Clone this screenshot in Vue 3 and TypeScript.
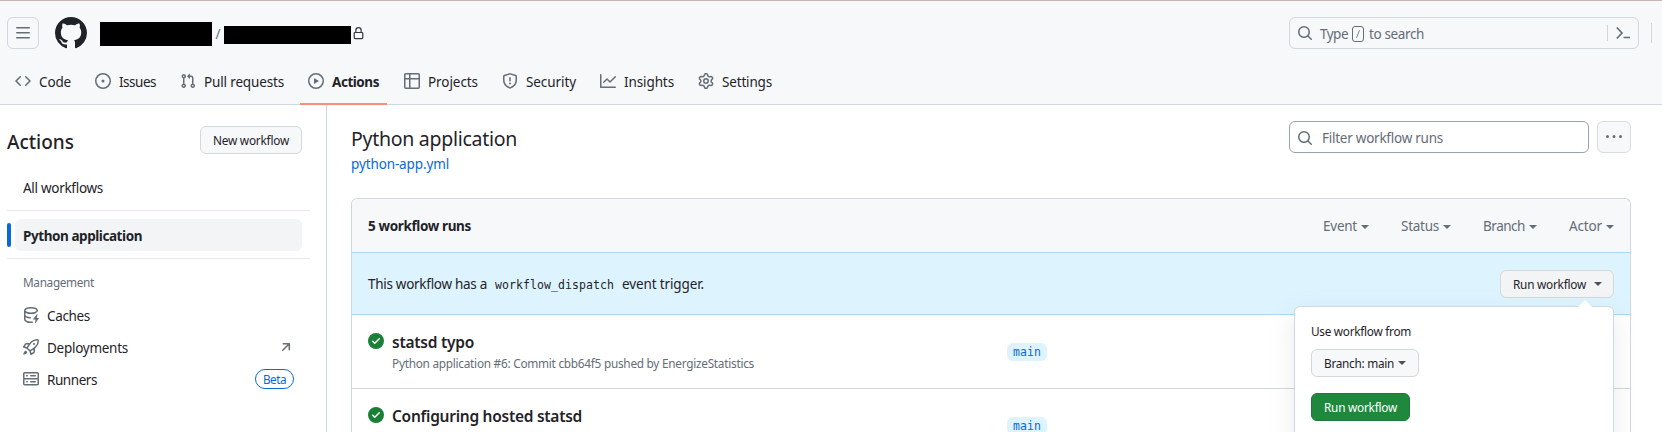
<script setup lang="ts">
import type { Directive } from 'vue'

// Tracks a text run so that it spans the requested width in pixels.
const vFit: Directive<HTMLElement, number> = {
  mounted(el, { value }) {
    const range = document.createRange()
    range.selectNodeContents(el)
    const natural = range.getBoundingClientRect().width
    const count = (el.textContent ?? '').length
    el.style.letterSpacing = `${(value - natural) / count}px`
    el.style.width = `${value}px`
  },
}

interface Tab { label: string; width: number; icon: string; active?: boolean }
interface Run { title: string; width: number; meta?: string; metaWidth?: number; branch: string }

const icons: Record<string, string> = {
  code: 'm11.28 3.22 4.25 4.25a.75.75 0 0 1 0 1.06l-4.25 4.25a.749.749 0 0 1-1.275-.326.749.749 0 0 1 .215-.734L13.94 8l-3.72-3.72a.749.749 0 0 1 .326-1.275.749.749 0 0 1 .734.215Zm-6.56 0a.751.751 0 0 1 1.042.018.751.751 0 0 1 .018 1.042L2.06 8l3.72 3.72a.749.749 0 0 1-.326 1.275.749.749 0 0 1-.734-.215L.47 8.53a.75.75 0 0 1 0-1.06Z',
  issues: 'M8 9.5a1.5 1.5 0 1 0 0-3 1.5 1.5 0 0 0 0 3ZM8 0a8 8 0 1 1 0 16A8 8 0 0 1 8 0ZM1.5 8a6.5 6.5 0 1 0 13 0 6.5 6.5 0 0 0-13 0Z',
  pulls: 'M1.5 3.25a2.25 2.25 0 1 1 3 2.122v5.256a2.251 2.251 0 1 1-1.5 0V5.372A2.25 2.25 0 0 1 1.5 3.25Zm5.677-.177L9.573.677A.25.25 0 0 1 10 .854V2.5h1A2.5 2.5 0 0 1 13.5 5v5.628a2.251 2.251 0 1 1-1.5 0V5a1 1 0 0 0-1-1h-1v1.646a.25.25 0 0 1-.427.177L7.177 3.427a.25.25 0 0 1 0-.354ZM3.75 2.5a.75.75 0 1 0 0 1.5.75.75 0 0 0 0-1.5Zm0 9.5a.75.75 0 1 0 0 1.5.75.75 0 0 0 0-1.5Zm8.25.75a.75.75 0 1 0 1.5 0 .75.75 0 0 0-1.5 0Z',
  actions: 'M8 0a8 8 0 1 1 0 16A8 8 0 0 1 8 0ZM1.5 8a6.5 6.5 0 1 0 13 0 6.5 6.5 0 0 0-13 0Zm4.879-2.773 4.264 2.559a.25.25 0 0 1 0 .428l-4.264 2.559A.25.25 0 0 1 6 10.559V5.442a.25.25 0 0 1 .379-.215Z',
  projects: 'M0 1.75C0 .784.784 0 1.75 0h12.5C15.216 0 16 .784 16 1.75v12.5A1.75 1.75 0 0 1 14.25 16H1.75A1.75 1.75 0 0 1 0 14.25ZM6.5 6.5v8h7.75a.25.25 0 0 0 .25-.25V6.5Zm8-1.5V1.75a.25.25 0 0 0-.25-.25H6.5V5Zm-13 1.5v7.75c0 .138.112.25.25.25H5v-8ZM5 5V1.5H1.75a.25.25 0 0 0-.25.25V5Z',
  security: 'M7.467.133a1.748 1.748 0 0 1 1.066 0l5.25 1.68A1.75 1.75 0 0 1 15 3.48V7c0 1.566-.32 3.182-1.303 4.682-.983 1.498-2.585 2.813-5.032 3.855a1.697 1.697 0 0 1-1.33 0c-2.447-1.042-4.049-2.357-5.032-3.855C1.32 10.182 1 8.566 1 7V3.48a1.755 1.755 0 0 1 1.217-1.667Zm.61 1.429a.25.25 0 0 0-.153 0l-5.25 1.68a.25.25 0 0 0-.174.238V7c0 1.358.275 2.666 1.057 3.86.784 1.194 2.121 2.34 4.366 3.297a.196.196 0 0 0 .154 0c2.245-.956 3.582-2.104 4.366-3.298C13.225 9.666 13.5 8.36 13.5 7V3.48a.251.251 0 0 0-.174-.237l-5.25-1.68ZM8.75 4.75v3a.75.75 0 0 1-1.5 0v-3a.75.75 0 0 1 1.5 0ZM9 10.5a1 1 0 1 1-2 0 1 1 0 0 1 2 0Z',
  insights: 'M1.5 1.75V13.5h13.75a.75.75 0 0 1 0 1.5H.75a.75.75 0 0 1-.75-.75V1.75a.75.75 0 0 1 1.5 0Zm14.28 2.53-5.25 5.25a.75.75 0 0 1-1.06 0L7 7.06 4.28 9.78a.751.751 0 0 1-1.042-.018.751.751 0 0 1-.018-1.042l3.25-3.25a.75.75 0 0 1 1.06 0L10 7.94l4.72-4.72a.751.751 0 0 1 1.042.018.751.751 0 0 1 .018 1.042Z',
  settings: 'M8 0a8.2 8.2 0 0 1 .701.031C9.444.095 9.99.645 10.16 1.29l.288 1.107c.018.066.079.158.212.224.231.114.454.243.668.386.123.082.233.09.299.071l1.103-.303c.644-.176 1.392.021 1.82.63.27.385.506.792.704 1.218.315.675.111 1.422-.364 1.891l-.814.806c-.049.048-.098.147-.088.294.016.257.016.515 0 .772-.01.147.038.246.088.294l.814.806c.475.469.679 1.216.364 1.891a7.977 7.977 0 0 1-.704 1.217c-.428.61-1.176.807-1.82.63l-1.102-.302c-.067-.019-.177-.011-.3.071a5.909 5.909 0 0 1-.668.386c-.133.066-.194.158-.211.224l-.29 1.106c-.168.646-.715 1.196-1.458 1.26a8.006 8.006 0 0 1-1.402 0c-.743-.064-1.289-.614-1.458-1.26l-.289-1.106c-.018-.066-.079-.158-.212-.224a5.738 5.738 0 0 1-.668-.386c-.123-.082-.233-.09-.299-.071l-1.103.303c-.644.176-1.392-.021-1.82-.63a8.12 8.12 0 0 1-.704-1.218c-.315-.675-.111-1.422.363-1.891l.815-.806c.05-.048.098-.147.088-.294a6.214 6.214 0 0 1 0-.772c.01-.147-.038-.246-.088-.294l-.815-.806C.635 6.045.431 5.298.746 4.623a7.92 7.92 0 0 1 .704-1.217c.428-.61 1.176-.807 1.82-.63l1.102.302c.067.019.177.011.3-.071.214-.143.437-.272.668-.386.133-.066.194-.158.211-.224l.29-1.106C6.009.645 6.556.095 7.299.03 7.53.01 7.764 0 8 0Zm-.571 1.525c-.036.003-.108.036-.137.146l-.289 1.105c-.147.561-.549.967-.998 1.189-.173.086-.34.183-.5.29-.417.278-.97.423-1.529.27l-1.103-.303c-.109-.03-.175.016-.195.045-.22.312-.412.644-.573.99-.014.031-.021.11.059.19l.815.806c.411.406.562.957.53 1.456a4.709 4.709 0 0 0 0 .582c.032.499-.119 1.05-.53 1.456l-.815.806c-.081.08-.073.159-.059.19.162.346.353.677.573.989.02.03.085.076.195.046l1.102-.303c.56-.153 1.113-.008 1.53.27.161.107.328.204.501.29.447.222.85.629.997 1.189l.289 1.105c.029.109.101.143.137.146a6.6 6.6 0 0 0 1.142 0c.036-.003.108-.036.137-.146l.289-1.105c.147-.561.549-.967.998-1.189.173-.086.34-.183.5-.29.417-.278.97-.423 1.529-.27l1.103.303c.109.029.175-.016.195-.045.22-.313.411-.644.573-.99.014-.031.021-.11-.059-.19l-.815-.806c-.411-.406-.562-.957-.53-1.456a4.709 4.709 0 0 0 0-.582c-.032-.499.119-1.05.53-1.456l.815-.806c.081-.08.073-.159.059-.19a6.464 6.464 0 0 0-.573-.989c-.02-.03-.085-.076-.195-.046l-1.102.303c-.56.153-1.113.008-1.53-.27a4.44 4.44 0 0 0-.501-.29c-.447-.222-.85-.629-.997-1.189l-.289-1.105c-.029-.11-.101-.143-.137-.146a6.6 6.6 0 0 0-1.142 0ZM11 8a3 3 0 1 1-6 0 3 3 0 0 1 6 0ZM9.5 8a1.5 1.5 0 1 0-3.001.001A1.5 1.5 0 0 0 9.5 8Z',
  search: 'M10.68 11.74a6 6 0 0 1-7.922-8.982 6 6 0 0 1 8.982 7.922l3.04 3.04a.749.749 0 0 1-.326 1.275.749.749 0 0 1-.734-.215ZM11.5 7a4.499 4.499 0 1 0-8.997 0A4.499 4.499 0 0 0 11.5 7Z',
  menu: 'M1 2.75A.75.75 0 0 1 1.75 2h12.5a.75.75 0 0 1 0 1.5H1.75A.75.75 0 0 1 1 2.75Zm0 5A.75.75 0 0 1 1.75 7h12.5a.75.75 0 0 1 0 1.5H1.75A.75.75 0 0 1 1 7.75ZM1.75 12h12.5a.75.75 0 0 1 0 1.5H1.75a.75.75 0 0 1 0-1.5Z',
  mark: 'M8 0c4.42 0 8 3.58 8 8a8.013 8.013 0 0 1-5.45 7.59c-.4.08-.55-.17-.55-.38 0-.27.01-1.13.01-2.2 0-.75-.25-1.23-.54-1.48 1.78-.2 3.65-.88 3.65-3.95 0-.88-.31-1.59-.82-2.15.08-.2.36-1.02-.08-2.12 0 0-.67-.22-2.2.82-.64-.18-1.32-.27-2-.27-.68 0-1.36.09-2 .27-1.53-1.03-2.2-.82-2.2-.82-.44 1.1-.16 1.92-.08 2.12-.51.56-.82 1.28-.82 2.15 0 3.06 1.86 3.75 3.64 3.95-.23.2-.44.55-.51 1.07-.46.21-1.61.55-2.33-.66-.15-.24-.6-.83-1.23-.82-.67.01-.27.38.01.53.34.19.73.9.82 1.13.16.45.68 1.31 2.69.94 0 .67.01 1.3.01 1.49 0 .21-.15.45-.55.38A7.995 7.995 0 0 1 0 8c0-4.42 3.58-8 8-8Z',
  lock: 'M4 4a4 4 0 0 1 8 0v2h.25c.966 0 1.75.784 1.75 1.75v5.5A1.75 1.75 0 0 1 12.25 15h-8.5A1.75 1.75 0 0 1 2 13.25v-5.5C2 6.784 2.784 6 3.75 6H4Zm8.25 3.5h-8.5a.25.25 0 0 0-.25.25v5.5c0 .138.112.25.25.25h8.5a.25.25 0 0 0 .25-.25v-5.5a.25.25 0 0 0-.25-.25ZM10.5 6V4a2.5 2.5 0 1 0-5 0v2Z',
  dots: 'M8 9a1.5 1.5 0 1 0 0-3 1.5 1.5 0 0 0 0 3ZM1.5 9a1.5 1.5 0 1 0 0-3 1.5 1.5 0 0 0 0 3Zm13 0a1.5 1.5 0 1 0 0-3 1.5 1.5 0 0 0 0 3Z',
  check: 'M8 16A8 8 0 1 1 8 0a8 8 0 0 1 0 16Zm3.78-9.72a.751.751 0 0 0-.018-1.042.751.751 0 0 0-1.042-.018L6.75 9.19 5.28 7.72a.751.751 0 0 0-1.042.018.751.751 0 0 0-.018 1.042l2 2a.75.75 0 0 0 1.06 0Z',
  caches: 'M2.5 5.724V8c0 .248.238.7 1.169 1.159.874.43 2.144.745 3.62.822a.75.75 0 1 1-.078 1.498c-1.622-.085-3.102-.432-4.204-.975a5.565 5.565 0 0 1-.507-.28V12.5c0 .133.058.318.282.551.227.237.591.483 1.101.707 1.015.447 2.47.742 4.117.742.406 0 .802-.018 1.183-.052a.751.751 0 1 1 .134 1.494C8.89 15.98 8.45 16 8 16c-1.805 0-3.475-.32-4.721-.869-.623-.274-1.173-.619-1.579-1.041-.408-.425-.7-.964-.7-1.59v-9c0-.626.292-1.165.7-1.591.406-.42.956-.766 1.579-1.04C4.525.32 6.195 0 8 0c1.806 0 3.476.32 4.721.869.623.274 1.173.619 1.579 1.041.408.425.7.964.7 1.59 0 .626-.292 1.165-.7 1.591-.406.42-.956.766-1.578 1.04C11.475 6.68 9.805 7 8 7c-1.805 0-3.475-.32-4.721-.869a6.15 6.15 0 0 1-.779-.407Zm0-2.224c0 .133.058.318.282.551.227.237.591.483 1.101.707C4.898 5.205 6.353 5.5 8 5.5c1.646 0 3.101-.295 4.118-.742.508-.224.873-.471 1.1-.708.224-.232.282-.417.282-.55 0-.133-.058-.318-.282-.551-.227-.237-.591-.483-1.101-.707C11.102 1.795 9.647 1.5 8 1.5c-1.646 0-3.101.295-4.118.742-.508.224-.873.471-1.1.708-.224.232-.282.417-.282.55ZM14.49 7.582a.375.375 0 0 0-.66-.313l-3.625 4.625a.375.375 0 0 0 .295.606h2.127l-.619 2.922a.375.375 0 0 0 .666.304l3.125-4.125A.375.375 0 0 0 15.500 11h-1.778Z',
  rocket: 'M14.064 0h.186C15.216 0 16 .784 16 1.75v.186a8.752 8.752 0 0 1-2.564 6.186l-.458.459c-.314.314-.641.616-.979.904v3.207c0 .608-.315 1.172-.833 1.49l-2.774 1.707a.749.749 0 0 1-1.11-.418l-.954-3.102a1.214 1.214 0 0 1-.145-.125L3.754 9.816a1.218 1.218 0 0 1-.124-.145L.528 8.717a.749.749 0 0 1-.418-1.11l1.71-2.774A1.748 1.748 0 0 1 3.31 4h3.204c.288-.338.59-.665.904-.979l.459-.458A8.749 8.749 0 0 1 14.064 0ZM8.938 3.623h-.002l-.458.458c-.76.76-1.437 1.598-2.02 2.5l-1.5 2.317 2.143 2.143 2.317-1.5c.902-.583 1.74-1.26 2.499-2.02l.459-.458a7.25 7.25 0 0 0 2.123-5.127V1.75a.25.25 0 0 0-.25-.25h-.186a7.249 7.249 0 0 0-5.125 2.123ZM3.56 14.56c-.732.732-2.334 1.045-3.005 1.148a.234.234 0 0 1-.201-.064.234.234 0 0 1-.064-.201c.103-.671.416-2.273 1.15-3.003a1.502 1.502 0 1 1 2.12 2.12Zm6.94-3.935c-.088.06-.177.118-.266.175l-2.35 1.521.548 1.783 1.949-1.2a.25.25 0 0 0 .119-.213ZM3.678 8.116 5.2 5.766c.058-.09.117-.178.176-.266H3.309a.25.25 0 0 0-.213.119l-1.2 1.95ZM12 5a1 1 0 1 1-2 0 1 1 0 0 1 2 0Z',
  server: 'M1.75 1h12.5c.966 0 1.75.784 1.75 1.75v4c0 .372-.116.717-.314 1 .198.283.314.628.314 1v4a1.75 1.75 0 0 1-1.75 1.75H1.75A1.75 1.75 0 0 1 0 12.75v-4c0-.358.109-.707.314-1a1.739 1.739 0 0 1-.314-1v-4C0 1.784.784 1 1.75 1ZM1.5 2.75v4c0 .138.112.25.25.25h12.5a.25.25 0 0 0 .25-.25v-4a.25.25 0 0 0-.25-.25H1.75a.25.25 0 0 0-.25.25Zm.25 5.75a.25.25 0 0 0-.25.25v4c0 .138.112.25.25.25h12.5a.25.25 0 0 0 .25-.25v-4a.25.25 0 0 0-.25-.25ZM7 4.75A.75.75 0 0 1 7.75 4h4.5a.75.75 0 0 1 0 1.5h-4.5A.75.75 0 0 1 7 4.75ZM7.75 10h4.5a.75.75 0 0 1 0 1.5h-4.5a.75.75 0 0 1 0-1.5ZM3 4.75A.75.75 0 0 1 3.75 4h.5a.75.75 0 0 1 0 1.5h-.5A.75.75 0 0 1 3 4.75ZM3.75 10h.5a.75.75 0 0 1 0 1.5h-.5a.75.75 0 0 1 0-1.5Z',
  arrow: 'M4.53 4.75A.75.75 0 0 1 5.28 4h6.01a.75.75 0 0 1 .75.75v6.01a.75.75 0 0 1-1.5 0v-4.2l-5.26 5.261a.749.749 0 0 1-1.275-.326.749.749 0 0 1 .215-.734L9.48 5.5h-4.2a.75.75 0 0 1-.75-.75Z',
}

const tabs: Tab[] = [
  { label: 'Code', width: 32, icon: 'code' },
  { label: 'Issues', width: 37, icon: 'issues' },
  { label: 'Pull requests', width: 80, icon: 'pulls' },
  { label: 'Actions', width: 47, icon: 'actions', active: true },
  { label: 'Projects', width: 50, icon: 'projects' },
  { label: 'Security', width: 50, icon: 'security' },
  { label: 'Insights', width: 50, icon: 'insights' },
  { label: 'Settings', width: 50, icon: 'settings' },
]

const management = [
  { label: 'Caches', width: 43, icon: 'caches' },
  { label: 'Deployments', width: 81, icon: 'rocket' },
  { label: 'Runners', width: 50, icon: 'server' },
]

const filters = [
  { label: 'Event', width: 34 },
  { label: 'Status', width: 38 },
  { label: 'Branch', width: 42 },
  { label: 'Actor', width: 33 },
]

const runs: Run[] = [
  { title: 'statsd typo', width: 82, meta: 'Python application #6: Commit cbb64f5 pushed by EnergizeStatistics', metaWidth: 362, branch: 'main' },
  { title: 'Configuring hosted statsd', width: 190, branch: 'main' },
]
</script>

<template>
  <div class="page">
    <header class="header">
      <div class="topbar">
        <button class="menu"><svg class="icon" viewBox="0 0 16 16"><path :d="icons.menu" /></svg></button>
        <svg class="mark" viewBox="0 0 16 16"><path :d="icons.mark" /></svg>
        <div class="owner"></div>
        <span class="slash">/</span>
        <div class="repo"></div>
        <svg class="lock" viewBox="0 0 16 16"><path :d="icons.lock" /></svg>
        <div class="search">
          <svg class="icon" viewBox="0 0 16 16"><path :d="icons.search" /></svg>
          <span v-fit="28" class="search-type">Type</span>
          <kbd class="key"><svg viewBox="0 0 12 16"><path d="M7.8 3.5 4.2 12.5" /></svg></kbd>
          <span v-fit="55">to search</span>
          <i class="bar"></i>
          <svg class="prompt" viewBox="0 0 16 16"><path d="M1.8 2.5 7 8l-5.200 5.500M8.500 12.500H15" /></svg>
        </div>
        <i class="divider"></i>
      </div>
      <nav class="tabs">
        <a v-for="t in tabs" :key="t.label" class="tab" :class="{ active: t.active }">
          <svg class="icon" viewBox="0 0 16 16"><path :d="icons[t.icon]" /></svg>
          <span v-fit="t.width">{{ t.label }}</span>
        </a>
      </nav>
    </header>

    <div class="body">
      <aside class="side">
        <div class="side-head">
          <h2 v-fit="67">Actions</h2>
          <button class="btn"><span v-fit="76">New workflow</span></button>
        </div>
        <a class="item all"><span v-fit="80">All workflows</span></a>
        <hr />
        <div class="current">
          <i class="marker"></i>
          <a class="item selected"><span v-fit="119">Python application</span></a>
        </div>
        <hr />
        <h3><span v-fit="71">Management</span></h3>
        <a v-for="m in management" :key="m.label" class="item">
          <svg class="icon" viewBox="0 0 16 16"><path :d="icons[m.icon]" /></svg>
          <span v-fit="m.width">{{ m.label }}</span>
          <svg v-if="m.icon === 'rocket'" class="icon external" viewBox="0 0 16 16"><path :d="icons.arrow" /></svg>
          <span v-if="m.icon === 'server'" class="beta"><span v-fit="23">Beta</span></span>
        </a>
      </aside>

      <main class="main">
        <div class="main-head">
          <div class="heading">
            <h1><span v-fit="166">Python application</span></h1>
            <a class="file"><span v-fit="98">python-app.yml</span></a>
          </div>
          <div class="filter-input">
            <svg class="icon" viewBox="0 0 16 16"><path :d="icons.search" /></svg>
            <span v-fit="121">Filter workflow runs</span>
          </div>
          <button class="more"><svg class="icon" viewBox="0 0 16 16"><path :d="icons.dots" /></svg></button>
        </div>

        <section class="box">
          <div class="box-head">
            <strong v-fit="103">5 workflow runs</strong>
            <div class="filters">
              <span v-for="f in filters" :key="f.label" class="filter"><span v-fit="f.width">{{ f.label }}</span><i class="caret"></i></span>
            </div>
          </div>
          <div class="dispatch">
            <span v-fit="119">This workflow has a</span>
            <code v-fit="119">workflow_dispatch</code>
            <span v-fit="82">event trigger.</span>
            <div class="dropdown">
              <button class="btn open"><span v-fit="73">Run workflow</span><i class="caret"></i></button>
              <div class="popover">
                <p><span v-fit="100">Use workflow from</span></p>
                <button class="btn"><span v-fit="70">Branch: main</span><i class="caret"></i></button>
                <button class="btn primary"><span v-fit="73">Run workflow</span></button>
              </div>
            </div>
          </div>
          <article v-for="r in runs" :key="r.title" class="run">
            <svg class="check" viewBox="0 0 16 16"><path :d="icons.check" /></svg>
            <div class="run-text">
              <strong v-fit="r.width">{{ r.title }}</strong>
              <span v-if="r.meta" v-fit="r.metaWidth ?? 0" class="meta">{{ r.meta }}</span>
            </div>
            <span class="branch"><span v-fit="28">{{ r.branch }}</span></span>
          </article>
        </section>
      </main>
    </div>
  </div>
</template>

<style>
html, body { overflow: hidden; }
</style>

<style scoped>
* { box-sizing: border-box; }
.page {
  width: 1662px; height: 432px; overflow: hidden; background: #fff; color: #1f2328;
  font: 13.5px/20px "Noto Sans", "Open Sans", sans-serif; white-space: nowrap;
}
h1, h2, h3, p { margin: 0; font-weight: 400; }
button { font: inherit; color: inherit; margin: 0; }
span, strong, code { flex: none; }
.icon { width: 16px; height: 16px; fill: #656d76; flex: none; display: block; }

.header { height: 105px; background: #f6f8fa; border-top: 1px solid #c6b5b1; border-bottom: 1px solid #d0d7de; }
.topbar { display: flex; align-items: center; height: 64px; padding-left: 7px; }
.menu { width: 32px; height: 32px; padding: 7px; border: 1px solid #d0d7de; border-radius: 6px; background: transparent; }
.mark { width: 32px; height: 32px; margin-left: 16px; fill: #1f2328; }
.owner { width: 112px; height: 24px; margin-left: 13px; margin-top: 2px; background: #000; }
.slash { width: 12px; padding-top: 2px; text-align: center; color: #656d76; }
.repo { width: 127px; height: 18px; margin-top: 4px; background: #000; }
.lock { width: 13px; height: 13px; margin-left: 1px; fill: #33383e; }
.search { display: flex; align-items: center; width: 350px; height: 32px; margin-left: auto; padding-left: 7px; border: 1px solid #d0d7de; border-radius: 6px; color: #656d76; }
.search span { padding-top: 1px; }
.search-type { margin-left: 7px; }
.key { width: 12px; height: 16px; margin: 1px 5px 0 4px; border: 1px solid #656d76; border-radius: 3px; display: flex; }
.key svg { width: 10px; height: 14px; fill: none; stroke: #656d76; }
.bar { width: 1px; height: 16px; margin-left: auto; background: #d0d7de; }
.prompt { width: 16px; height: 16px; margin: 0 7px; fill: none; stroke: #656d76; stroke-width: 1.700; }
.divider { width: 1px; height: 20px; margin: 0 10px 0 12px; background: #d0d7de; }
.tabs { display: flex; gap: 8px; height: 40px; padding-left: 7px; }
.tab { display: flex; gap: 8px; align-items: center; height: 40px; padding: 0 8px 8px; }
.tab span { padding-top: 1px; }
.tab:nth-child(n+5) { padding: 0 7.500px 8px 8.500px; gap: 8.500px; }
.tab:nth-child(n+5) span { margin-right: -.500px; }
.active { font-weight: 700; border-bottom: 2px solid #fd8c73; padding-bottom: 6px; }

.body { display: flex; height: 327px; }
.side { width: 327px; border-right: 1px solid #d0d7de; padding: 21px 16px 0 7px; }
.side-head { display: flex; align-items: center; justify-content: space-between; height: 28px; margin-right: 8px; }
h2 { font-size: 19px; line-height: 28px; font-weight: 500; padding-top: 4px; }
.btn {
  display: flex; align-items: center; height: 28px; padding: 0 12px; font-size: 11.800px;
  background: #f6f8fa; border: 1px solid #d5d8da; border-radius: 6px;
}
hr { height: 1px; margin: 7px 0 8px; border: 0; background: #e6e9ec; }
.item { display: flex; align-items: center; gap: 8px; height: 32px; margin: 0 8px; padding: 0 8px; }
.item > span:not(.beta) { padding-top: 1px; }
.all { margin-top: 17px; }
.current { display: flex; align-items: center; gap: 4px; }
.marker { width: 4px; height: 24px; border-radius: 3px; background: #0969da; }
.selected { flex: 1; margin: 0 8px 0 0; background: #f2f4f6; border-radius: 6px; font-weight: 700; }
h3 { height: 32px; padding: 5px 16px; font-size: 11.800px; line-height: 20px; color: #656d76; }
.external { margin-left: auto; }
.beta { display: flex; align-items: center; height: 20px; margin: 0 0 0 auto; padding: 0 7px; border: 1px solid #0969da; border-radius: 10px; color: #0969da; font-size: 11.800px; }

.main { flex: 1; padding: 16px 31px 0 24px; }
.main-head { display: flex; height: 77px; }
.heading { flex: 1; padding-top: 6px; }
h1 { font-size: 19.500px; line-height: 24px; height: 28px; }
.file { display: block; color: #0969da; line-height: 18px; }
.filter-input { display: flex; align-items: center; width: 300px; height: 32px; padding-left: 7px; gap: 9px; color: #656d76; border: 1px solid #9aa3ad; border-radius: 6px; }
.filter-input .icon { margin-top: 2px; }
.filter-input span { padding-top: 1px; }
.more { width: 34px; height: 32px; margin-left: 8px; padding: 7px 8px; background: #f6f8fa; border: 1px solid #d9dde0; border-radius: 6px; }
.box { border: 1px solid #d0d7de; border-bottom: 0; border-radius: 6px 6px 0 0; height: 260px; }
.box-head { display: flex; align-items: center; height: 53px; padding: 1px 16px 0; background: #f6f8fa; border-radius: 6px 6px 0 0; }
.filters { display: flex; gap: 32px; margin-left: auto; color: #656d76; }
.filter { display: flex; align-items: center; gap: 4px; }
.caret { width: 0; height: 0; border: 4px solid transparent; border-top-color: currentColor; border-bottom: 0; margin-top: 2px; flex: none; }
.dispatch { display: flex; align-items: center; height: 63px; padding: 0 16px; background: #ddf4ff; border: 1px solid #a5d9ff; border-width: 1px 0; }
code { margin: 2px 8px 0; font: 11.500px "DejaVu Sans Mono", monospace; }
.dropdown { position: relative; margin-left: auto; }
.open { background: #f3f4f6; padding-right: 11px; }
.btn .caret { margin: 1px 0 0 8px; color: #4c5156; }
.popover {
  position: absolute; top: 36px; right: 0; width: 320px; height: 200px; padding: 16px; z-index: 2;
  background: #fff; border: 1px solid #d0d7de; border-radius: 6px; box-shadow: 0 8px 24px rgba(140, 149, 159, .2);
}
.popover::before { content: ""; position: absolute; top: -7px; right: 21px; border: 7px solid transparent; border-top: 0; border-bottom-color: #fff; }
.popover p { height: 26px; line-height: 17px; font-size: 11.800px; }
.popover .btn .caret { margin-left: 4px; }
.primary { margin-top: 16px; color: #fff; background: #1f883d; border-color: #1b7a36; }
.run { display: flex; height: 74px; padding: 18px 16px 0; border-bottom: 1px solid #d0d7de; }
.check { width: 16px; height: 16px; fill: #1a7f37; flex: none; }
.run-text { display: flex; flex-direction: column; width: 615px; padding-left: 8px; }
.run-text strong { font-size: 15.500px; line-height: 20px; margin-top: -1px; font-weight: 600; }
.meta { font-size: 11.800px; line-height: 18px; color: #656d76; margin-top: 2px; }
.branch { display: flex; align-items: center; height: 18px; margin: 10px 0 0 8px; padding: 0 6px; color: #0969da; background: #ddf4ff; border-radius: 6px; font: 11.500px "DejaVu Sans Mono", monospace; }
</style>
